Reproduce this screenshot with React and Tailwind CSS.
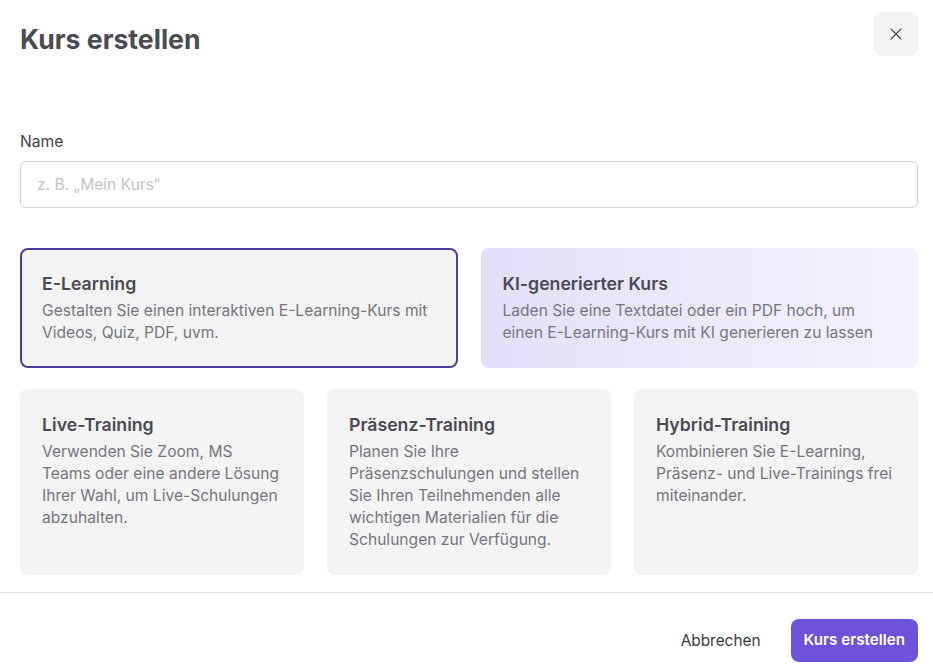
import React, { useState } from 'react';
import { X } from 'lucide-react';

const courseTypes = [
  {
    id: 'elearning',
    title: 'E-Learning',
    text: 'Gestalten Sie einen interaktiven E-Learning-Kurs mit Videos, Quiz, PDF, uvm.',
  },
  {
    id: 'ai',
    title: 'KI-generierter Kurs',
    text: 'Laden Sie eine Textdatei oder ein PDF hoch, um einen E-Learning-Kurs mit KI generieren zu lassen',
    ai: true,
  },
  {
    id: 'live',
    title: 'Live-Training',
    text: 'Verwenden Sie Zoom, MS Teams oder eine andere Lösung Ihrer Wahl, um Live-Schulungen abzuhalten.',
  },
  {
    id: 'onsite',
    title: 'Präsenz-Training',
    text: 'Planen Sie Ihre Präsenzschulungen und stellen Sie Ihren Teilnehmenden alle wichtigen Materialien für die Schulungen zur Verfügung.',
  },
  {
    id: 'hybrid',
    title: 'Hybrid-Training',
    text: 'Kombinieren Sie E-Learning, Präsenz- und Live-Trainings frei miteinander.',
  },
];

const TypeCard = ({ type, selected, onSelect }) => (
  <button
    type="button"
    onClick={() => onSelect(type.id)}
    className={
      'text-left rounded-lg border-2 bg-origin-border px-5 pt-5 pb-[22px] flex flex-col ' +
      (selected ? 'border-[#4c3d9f] ' : 'border-transparent ') +
      (type.ai ? 'bg-gradient-to-r from-[#e4dff9] to-[#f5f3fd]' : 'bg-[#f4f4f4]')
    }
  >
    <span className="text-[17.7px] leading-7 font-semibold text-[#4a4a52]">{type.title}</span>
    <span className="mt-0.5 text-[15.6px] leading-[22px] text-[#76767e]">{type.text}</span>
  </button>
);

export default function App() {
  const [name, setName] = useState('');
  const [selected, setSelected] = useState('elearning');

  return (
    <div className="w-[933px] h-[670px] bg-white overflow-hidden font-['Inter',sans-serif]">
      <div className="pl-5 pr-[15px]">
        <div className="flex items-start justify-between pt-3">
          <h1 className="mt-[11px] text-[26.6px] leading-8 font-bold text-[#4b4b52]">
            Kurs erstellen
          </h1>
          <button
            type="button"
            className="w-11 h-11 rounded-lg bg-[#f3f3f3] flex items-center justify-center text-[#4a4a4a]"
          >
            <X size={20} strokeWidth={1.3} />
          </button>
        </div>

        <label className="block mt-[76px] text-[15.6px] leading-5 text-[#3f3f46]">Name</label>
        <input
          value={name}
          onChange={(e) => setName(e.target.value)}
          placeholder="z. B. „Mein Kurs“"
          className="mt-[9px] w-full h-[47px] rounded-md border border-[#d4d4d8] px-4 text-[15.6px] text-[#3f3f46] placeholder:text-[#c4c4c9] outline-none"
        />

        <div className="mt-10 grid grid-cols-2 gap-[23px] h-[120px]">
          {courseTypes.slice(0, 2).map((t) => (
            <TypeCard key={t.id} type={t} selected={selected === t.id} onSelect={setSelected} />
          ))}
        </div>
        <div className="mt-[21px] grid grid-cols-3 gap-[23px] h-[185px]">
          {courseTypes.slice(2).map((t) => (
            <TypeCard key={t.id} type={t} selected={selected === t.id} onSelect={setSelected} />
          ))}
        </div>
      </div>

      <div className="mt-[18px] border-t border-[#e4e4e7] px-[15px] pt-[26px] flex justify-end items-center gap-4">
        <button type="button" className="h-[43px] px-[14px] text-[15.4px] text-[#3a3a3f]">
          Abbrechen
        </button>
        <button
          type="button"
          className="h-[43px] px-[13px] rounded-lg bg-[#6c53da] text-[15.2px] font-semibold text-white"
        >
          Kurs erstellen
        </button>
      </div>
    </div>
  );
}
